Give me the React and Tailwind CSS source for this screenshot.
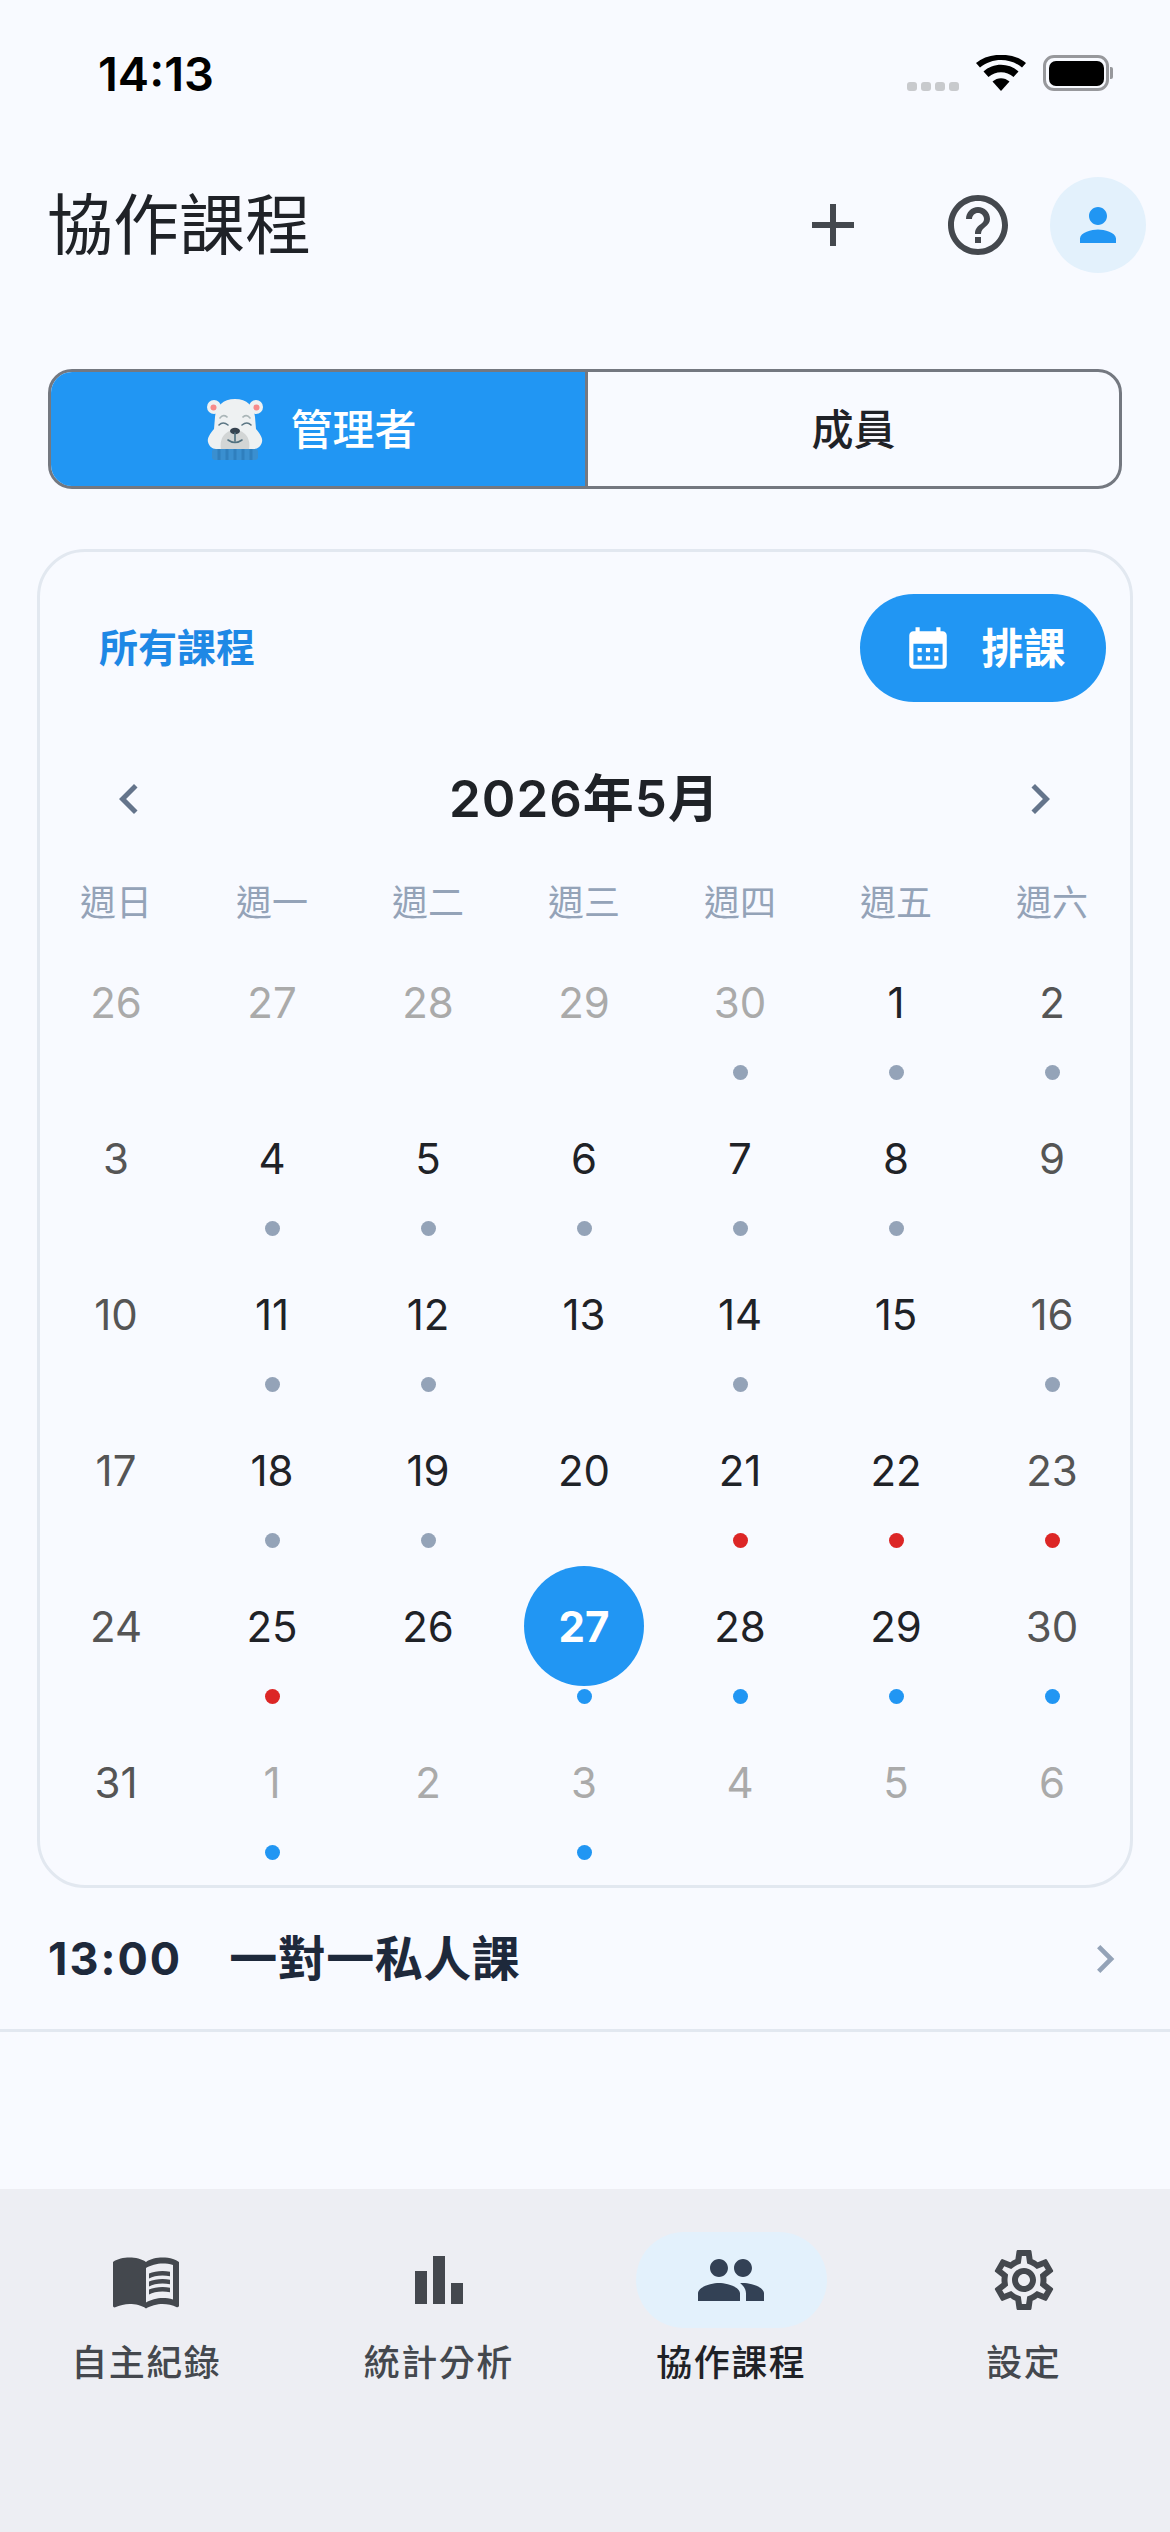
import { MdAdd, MdBarChart, MdCalendarMonth, MdChevronLeft, MdChevronRight, MdHelpOutline, MdMenuBook, MdOutlineSettings, MdPeople, MdPerson } from 'react-icons/md'

const weekdays = ['週日', '週一', '週二', '週三', '週四', '週五', '週六']

// g gray, r red, b blue dot; out = day of another month
const days = [
  { n: 26, out: true }, { n: 27, out: true }, { n: 28, out: true }, { n: 29, out: true }, { n: 30, out: true, dot: 'g' }, { n: 1, dot: 'g' }, { n: 2, dot: 'g' },
  { n: 3 }, { n: 4, dot: 'g' }, { n: 5, dot: 'g' }, { n: 6, dot: 'g' }, { n: 7, dot: 'g' }, { n: 8, dot: 'g' }, { n: 9 },
  { n: 10 }, { n: 11, dot: 'g' }, { n: 12, dot: 'g' }, { n: 13 }, { n: 14, dot: 'g' }, { n: 15 }, { n: 16, dot: 'g' },
  { n: 17 }, { n: 18, dot: 'g' }, { n: 19, dot: 'g' }, { n: 20 }, { n: 21, dot: 'r' }, { n: 22, dot: 'r' }, { n: 23, dot: 'r' },
  { n: 24 }, { n: 25, dot: 'r' }, { n: 26 }, { n: 27, dot: 'b', today: true }, { n: 28, dot: 'b' }, { n: 29, dot: 'b' }, { n: 30, dot: 'b' },
  { n: 31 }, { n: 1, out: true, dot: 'b' }, { n: 2, out: true }, { n: 3, out: true, dot: 'b' }, { n: 4, out: true }, { n: 5, out: true }, { n: 6, out: true },
]

const dotColors = { g: 'bg-[#94a3b8]', r: 'bg-[#dc2626]', b: 'bg-[#2196f3]' }

const navItems = [
  { label: '自主紀錄', icon: MdMenuBook },
  { label: '統計分析', icon: MdBarChart },
  { label: '協作課程', icon: MdPeople, active: true },
  { label: '設定', icon: MdOutlineSettings },
]

function Bear() {
  return (
    <svg width="56" height="61" viewBox="0 0 56 61" className="shrink-0">
      <rect x="5" y="50" width="46" height="11" rx="3" fill="#3a8fd0" />
      <path d="M12 50v11M20 50v11M28 50v11M36 50v11M44 50v11" stroke="#2f7fbe" strokeWidth="3" />
      <circle cx="7" cy="8" r="7" fill="#eef1f2" />
      <circle cx="49" cy="8" r="7" fill="#eef1f2" />
      <circle cx="6.5" cy="8.5" r="3" fill="#f78a8a" />
      <circle cx="49.5" cy="8.5" r="3" fill="#f78a8a" />
      <path d="M28 0C40 0 47 7 48 18L49 30C53 35 56 39 55 43C54 47 51 50 47 50H9C5 50 2 47 1 43C0 39 3 35 7 30L8 18C9 7 16 0 28 0Z" fill="#eef1f2" />
      <path d="M14 50C12 40 18 31 28 31C38 31 44 40 42 50Z" fill="#d2d5d5" />
      <path d="M13 19Q16 15 20 18M36 18Q40 15 43 19" stroke="#a9b5b7" strokeWidth="1.6" fill="none" strokeLinecap="round" />
      <path d="M12 26Q16 22 21 26M35 26Q40 22 44 26" stroke="#5b7684" strokeWidth="1.6" fill="none" strokeLinecap="round" />
      <ellipse cx="28" cy="32" rx="5" ry="3.2" fill="#36434f" />
      <path d="M28 34V42M21 41Q28 46 35 41" stroke="#50707f" strokeWidth="1.6" fill="none" strokeLinecap="round" />
    </svg>
  )
}

function StatusBar() {
  return (
    <div className="flex h-[177px] items-start justify-between pl-[98px] pr-[57px] pt-[50px]">
      <span className="text-[47px] font-semibold leading-[48px] text-black">14:13</span>
      <div className="flex items-center pt-[5px]">
        <div className="mt-[26px] flex gap-[4px]">
          <span className="h-[9px] w-[10px] rounded-[3px] bg-[#c8cacd]" />
          <span className="h-[9px] w-[10px] rounded-[3px] bg-[#c8cacd]" />
          <span className="h-[9px] w-[10px] rounded-[3px] bg-[#c8cacd]" />
          <span className="h-[9px] w-[10px] rounded-[3px] bg-[#c8cacd]" />
        </div>
        <svg width="50" height="36" viewBox="0 0 50 36" className="ml-[17px]">
          <path d="M25 36L16.5 26.5C21.5 22 28.5 22 33.5 26.5Z" fill="#000" />
          <path d="M12.5 22L7.5 16.5C17 7.5 33 7.5 42.5 16.5L37.5 22C30.5 15.5 19.5 15.5 12.5 22Z" fill="#000" />
          <path d="M4 12.5L0 8C13 -3 37 -3 50 8L46 12.5C34 2.5 16 2.5 4 12.5Z" fill="#000" />
        </svg>
        <div className="ml-[17px] flex items-center">
          <div className="flex h-[36px] w-[66px] items-center justify-center rounded-[11px] border-[3px] border-[#97989c]">
            <div className="h-[25px] w-[55px] rounded-[7px] bg-black" />
          </div>
          <div className="ml-[1px] h-[12px] w-[3px] rounded-r-[2px] bg-[#97989c]" />
        </div>
      </div>
    </div>
  )
}

function Header() {
  return (
    <div className="flex h-[96px] items-center pl-[47px] pr-[24px]">
      <h1 className="flex-1 text-[66px] font-normal leading-none text-[#1f2227]">協作課程</h1>
      <MdAdd size={72} className="mr-[73px] text-[#44484e]" />
      <MdHelpOutline size={72} className="mr-[36px] text-[#44484e]" />
      <div className="flex size-[96px] items-center justify-center rounded-full bg-[#e3f1fc]">
        <MdPerson size={54} className="text-[#2196f3]" />
      </div>
    </div>
  )
}

function RoleToggle() {
  return (
    <div className="mx-[48px] mt-[96px] flex h-[120px] overflow-hidden rounded-[24px] border-[3px] border-[#747880]">
      <div className="flex w-[537px] items-center justify-center gap-[27px] border-r-[3px] border-[#747880] bg-[#2196f3] pr-[12px] text-[42px] font-medium text-white">
        <Bear />
        <span>管理者</span>
      </div>
      <div className="flex flex-1 items-center justify-center text-[42px] font-medium text-[#1f2227]">成員</div>
    </div>
  )
}

function Calendar() {
  return (
    <div className="mx-[37px] mt-[60px] rounded-[48px] border-[3px] border-[#e2e8f0] pb-[7px]">
      <div className="flex items-center justify-between pl-[59px] pr-[24px] pt-[42px]">
        <span className="text-[39px] font-semibold text-[#1e88e5]">所有課程</span>
        <div className="flex h-[108px] w-[246px] items-center justify-center gap-[28px] rounded-full bg-[#2196f3] pl-[3px] text-[42px] font-semibold text-white">
          <MdCalendarMonth size={50} />
          <span>排課</span>
        </div>
      </div>
      <div className="mt-[61px] flex h-[72px] items-center justify-between pl-[59px] pr-[60px]">
        <MdChevronLeft size={60} className="text-[#64748b]" />
        <span className="text-[51px] font-semibold tracking-[1px] text-[#1f2227]">2026年5月</span>
        <MdChevronRight size={60} className="text-[#64748b]" />
      </div>
      <div className="-ml-[2px] mt-[47px] grid h-[42px] grid-cols-7 items-center text-center text-[36px] leading-none text-[#94a3b8]">
        {weekdays.map((w) => <span key={w}>{w}</span>)}
      </div>
      <div className="-ml-[2px] mt-[18px] grid grid-cols-7">
        {days.map((d, i) => (
          <div key={i} className="flex h-[156px] flex-col items-center">
            <div
              className={`flex size-[120px] items-center justify-center rounded-full text-[42px] ${
                d.today
                  ? 'bg-[#2196f3] font-bold text-white'
                  : d.out
                    ? 'text-[#aaaaaa]'
                    : i % 7 === 0 || i % 7 === 6
                      ? 'text-[#555555]'
                      : 'text-[#1f2227]'
              }`}
            >
              {d.n}
            </div>
            {d.dot && <span className={`mt-[3px] size-[15px] rounded-full ${dotColors[d.dot]}`} />}
          </div>
        ))}
      </div>
    </div>
  )
}

function LessonRow() {
  return (
    <div className="flex h-[144px] items-center border-b-[3px] border-[#e2e8f0] pl-[48px] pr-[37px]">
      <span className="text-[45px] font-bold tracking-[2px] text-[#1e293b]">13:00</span>
      <span className="ml-[47px] flex-1 text-[48px] font-bold tracking-[0.5px] text-[#1e293b]">一對一私人課</span>
      <MdChevronRight size={56} className="text-[#94a3b8]" />
    </div>
  )
}

function BottomNav() {
  return (
    <nav className="mt-auto grid h-[343px] grid-cols-4 bg-[#edeef3] pt-[43px]">
      {navItems.map((item) => {
        const Icon = item.icon
        return (
          <div key={item.label} className="flex flex-col items-center">
            <div className={`flex h-[96px] w-[191px] items-center justify-center rounded-full ${item.active ? 'bg-[#e3f1fc]' : ''}`}>
              <Icon size={72} className={item.active ? 'text-[#334155]' : 'text-[#44484e]'} />
            </div>
            <span className={`mt-[11px] text-[36px] font-medium leading-[48px] tracking-[1.5px] ${item.active ? 'text-[#1f2227]' : 'text-[#44484e]'}`}>
              {item.label}
            </span>
          </div>
        )
      })}
    </nav>
  )
}

export default function App() {
  return (
    <div className="flex h-[2532px] w-[1170px] flex-col overflow-hidden bg-[#f8faff] font-['Inter','Noto_Sans_CJK_TC',sans-serif]">
      <StatusBar />
      <Header />
      <RoleToggle />
      <Calendar />
      <LessonRow />
      <BottomNav />
    </div>
  )
}
